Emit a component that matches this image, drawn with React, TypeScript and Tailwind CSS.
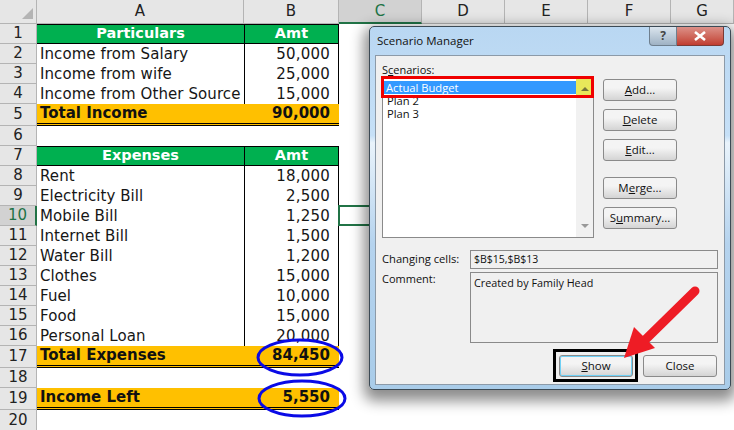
const COLS = [
  { label: 'A', w: 'w-[207px]' },
  { label: 'B', w: 'w-[95px]' },
  { label: 'C', w: 'w-[83px]', active: true },
  { label: 'D', w: 'w-[83px]' },
  { label: 'E', w: 'w-[83px]' },
  { label: 'F', w: 'w-[83px]' },
  { label: 'G', w: 'w-[63px]' },
];

type RowKind = 'head' | 'cell' | 'total' | 'blank';

const ROWS: { n: number; h: string; kind: RowKind; a?: string; b?: string }[] = [
  { n: 1, h: 'h-[20px]', kind: 'head', a: 'Particulars', b: 'Amt' },
  { n: 2, h: 'h-[20px]', kind: 'cell', a: 'Income from Salary', b: '50,000' },
  { n: 3, h: 'h-[20px]', kind: 'cell', a: 'Income from wife', b: '25,000' },
  { n: 4, h: 'h-[20px]', kind: 'cell', a: 'Income from Other Source', b: '15,000' },
  { n: 5, h: 'h-[22px]', kind: 'total', a: 'Total Income', b: '90,000' },
  { n: 6, h: 'h-[20px]', kind: 'blank' },
  { n: 7, h: 'h-[20px]', kind: 'head', a: 'Expenses', b: 'Amt' },
  { n: 8, h: 'h-[20px]', kind: 'cell', a: 'Rent', b: '18,000' },
  { n: 9, h: 'h-[20px]', kind: 'cell', a: 'Electricity Bill', b: '2,500' },
  { n: 10, h: 'h-[20px]', kind: 'cell', a: 'Mobile Bill', b: '1,250' },
  { n: 11, h: 'h-[20px]', kind: 'cell', a: 'Internet Bill', b: '1,500' },
  { n: 12, h: 'h-[20px]', kind: 'cell', a: 'Water Bill', b: '1,200' },
  { n: 13, h: 'h-[20px]', kind: 'cell', a: 'Clothes', b: '15,000' },
  { n: 14, h: 'h-[20px]', kind: 'cell', a: 'Fuel', b: '10,000' },
  { n: 15, h: 'h-[20px]', kind: 'cell', a: 'Food', b: '15,000' },
  { n: 16, h: 'h-[20px]', kind: 'cell', a: 'Personal Loan', b: '20,000' },
  { n: 17, h: 'h-[22px]', kind: 'total', a: 'Total Expenses', b: '84,450' },
  { n: 18, h: 'h-[20px]', kind: 'blank' },
  { n: 19, h: 'h-[22px]', kind: 'total', a: 'Income Left', b: '5,550' },
  { n: 20, h: 'h-[21px]', kind: 'blank' },
];

function Row({ row }: { row: (typeof ROWS)[number] }) {
  const active = row.n === 10;
  const header = (
    <div
      className={`flex w-[37px] shrink-0 items-center justify-center border-b border-[#b4b4b4] text-[15px] ${
        active ? 'border-r-2 border-r-[#217346] bg-[#d2d2d2] text-[#217346]' : 'border-r border-r-[#b4b4b4] bg-[#e6e6e6] text-[#222]'
      }`}
    >
      {row.n}
    </div>
  );

  if (row.kind === 'blank') {
    return <div className={`flex ${row.h}`}>{header}</div>;
  }
  if (row.kind === 'total') {
    return (
      <div className={`flex ${row.h}`}>
        {header}
        <div className="flex w-[302px] items-center justify-between border-b-[3px] border-double border-black bg-[#ffc000] pr-[9px] pl-[3px] text-[15px] font-bold text-[#111]">
          <span>{row.a}</span>
          <span>{row.b}</span>
        </div>
      </div>
    );
  }
  if (row.kind === 'head') {
    return (
      <div className={`flex ${row.h}`}>
        {header}
        <div className="flex w-[207px] items-center justify-center border-y border-black bg-[#00b050] text-[14.5px] font-bold text-white">
          {row.a}
        </div>
        <div className="flex w-[95px] items-center justify-center border-x border-y border-black bg-[#00b050] text-[14.5px] font-bold text-white">
          {row.b}
        </div>
      </div>
    );
  }
  return (
    <div className={`flex ${row.h}`}>
      {header}
      <div className="flex w-[207px] items-center overflow-hidden pl-[3px] text-[15px] tracking-[0.08px] whitespace-nowrap text-[#161616]">{row.a}</div>
      <div className="flex w-[95px] items-center justify-end border-x border-black pr-[8px] text-[15px] tracking-[0.2px] text-[#161616]">{row.b}</div>
    </div>
  );
}

function Sheet() {
  return (
    <div className="font-['DejaVu_Sans',sans-serif]">
      <div className="flex h-[24px]">
        <div className="relative w-[37px] shrink-0 border-r border-b border-[#b4b4b4] bg-[#e6e6e6]">
          <div className="absolute right-[3px] bottom-[4px] h-0 w-0 border-t-[11px] border-l-[11px] border-t-transparent border-l-transparent [border-bottom:0] [border-right:11px_solid_#b4b4b4]" />
        </div>
        {COLS.map((c) => (
          <div
            key={c.label}
            className={`flex ${c.w} items-center justify-center text-[15px] ${
              c.active
                ? 'border-r border-b-2 border-r-[#b4b4b4] border-b-[#217346] bg-[#d2d2d2] text-[#217346]'
                : 'border-r border-b border-[#b4b4b4] bg-[#e6e6e6] text-[#222]'
            }`}
          >
            {c.label}
          </div>
        ))}
      </div>
      {ROWS.map((r) => (
        <Row key={r.n} row={r} />
      ))}
    </div>
  );
}

function DlgButton({ children, className = '' }: { children: React.ReactNode; className?: string }) {
  return (
    <div
      className={`flex h-[22px] w-[74px] items-center justify-center rounded-[3px] border border-[#8a8a8a] bg-gradient-to-b from-[#f4f4f4] from-40% to-[#d4d4d4] text-[11.5px] text-[#111] ${className}`}
    >
      {children}
    </div>
  );
}

function Scenarios() {
  return (
    <div className="flex h-[161px] w-[212px] border border-[#8a8a8a] bg-white">
      <div className="flex-1 pt-[3px] pl-[1px]">
        <div className="h-[13px] bg-[#3399ff] pl-[2px] text-[11.2px] leading-[13px] text-white">Actual Budget</div>
        <div className="h-[13px] pl-[3px] text-[11.2px] leading-[13px] text-[#111]">Plan 2</div>
        <div className="h-[13px] pl-[3px] text-[11.2px] leading-[13px] text-[#111]">Plan 3</div>
      </div>
      <div className="flex w-[17px] flex-col justify-between bg-[#f1f1f1] pb-[9px]">
        <div className="flex h-[17px] items-end justify-center bg-[#e8e85a] pb-[4px]">
          <div className="h-0 w-0 border-x-[4px] border-b-[4px] border-x-transparent border-b-[#77773a]" />
        </div>
        <div className="flex justify-center">
          <div className="h-0 w-0 border-x-[4px] border-t-[4px] border-x-transparent border-t-[#999]" />
        </div>
      </div>
    </div>
  );
}

function Dialog() {
  return (
    <div className="absolute top-[26px] left-[369px] flex h-[364px] w-[362px] flex-col rounded-[5px] border border-[#3c4a55] bg-[linear-gradient(to_bottom,#b9d7f2_0%,#c6e0f7_30%,#e9f3fb_32%,#b5d3ee_60%,#a9cce9_100%)] px-[5px] pb-[4px] font-['Open_Sans',sans-serif] shadow-[0_6px_14px_5px_rgba(0,0,0,0.45)]">
      <div className="flex h-[28px] shrink-0 items-start justify-between">
        <span className="pt-[5px] pl-[2px] text-[11.5px] text-[#111]">Scenario Manager</span>
        <div className="mr-[1px] flex h-[19px]">
          <div className="flex w-[28px] items-center justify-center rounded-bl-[4px] border border-t-0 border-[#6f7f8e] bg-gradient-to-b from-[#dbe5ee] to-[#9fb2c4] text-[12px] font-bold text-[#444]">
            ?
          </div>
          <div className="flex w-[47px] items-center justify-center rounded-br-[4px] border border-t-0 border-l-0 border-[#7a3a35] bg-gradient-to-b from-[#dc9088] to-[#c03c30]">
            <svg width="14" height="10" viewBox="0 0 14 10" fill="none">
              <path d="M2 1 L12 9 M12 1 L2 9" stroke="white" strokeWidth="2.6" />
            </svg>
          </div>
        </div>
      </div>

      <div className="flex flex-1 flex-col border border-[#8c9aa8] bg-[#f0f0f0] pr-[6px] pl-[6px]">
        <div className="pt-[7px] text-[11px] leading-[14px] text-[#111]">
          S<span className="underline">c</span>enarios:
        </div>
        <div className="flex">
          <Scenarios />
          <div className="ml-[9px] flex flex-col gap-[8px] pt-[2px]">
            <DlgButton>
              <span className="underline">A</span>dd...
            </DlgButton>
            <DlgButton>
              <span className="underline">D</span>elete
            </DlgButton>
            <DlgButton>
              <span className="underline">E</span>dit...
            </DlgButton>
            <DlgButton className="mt-[8px]">
              M<span className="underline">e</span>rge...
            </DlgButton>
            <DlgButton>
              S<span className="underline">u</span>mmary...
            </DlgButton>
          </div>
        </div>

        <div className="mt-[12px] flex items-center">
          <span className="w-[88px] text-[11.2px] text-[#111]">Changing cells:</span>
          <div className="flex h-[19px] w-[248px] items-center border border-[#8a8a8a] pl-[3px] text-[10.5px] text-[#111]">
            $B$15,$B$13
          </div>
        </div>
        <div className="mt-[3px] flex">
          <span className="w-[88px] text-[11px] leading-[14px] text-[#111]">Comment:</span>
          <div className="h-[71px] w-[248px] border border-[#8a8a8a] pt-[2px] pl-[3px] text-[10.8px] text-[#111]">
            Created by Family Head
          </div>
        </div>

        <div className="mt-[12px] flex justify-end gap-[10px] pr-[1px]">
          <DlgButton className="border-[#2f9fd8] shadow-[inset_0_0_0_1px_#6fd0f5]">
            <span className="underline">S</span>how
          </DlgButton>
          <DlgButton>Close</DlgButton>
        </div>
      </div>
    </div>
  );
}

export default function App() {
  return (
    <div className="relative h-[430px] w-[734px] overflow-hidden bg-white">
      <Sheet />
      {/* selected cell C10 */}
      <div className="absolute top-[205px] left-[338px] h-[21px] w-[40px] border-2 border-[#217346]" />
      <Dialog />

      {/* callouts drawn on top of the screenshot */}
      <div className="absolute top-[76px] left-[381px] h-[22px] w-[213px] border-[3px] border-[#f00000]" />
      <div className="absolute top-[349px] left-[553px] h-[33px] w-[85px] border-[3px] border-black" />
      <svg className="absolute top-0 left-0" width="734" height="430" viewBox="0 0 734 430" fill="none">
        <ellipse cx="300" cy="357.5" rx="42" ry="17.5" stroke="#0a0ae6" strokeWidth="3" />
        <ellipse cx="302" cy="398.5" rx="43" ry="17.5" stroke="#0a0ae6" strokeWidth="3" />
        <path d="M695 291 L643 342" stroke="#ee1c25" strokeWidth="9" strokeLinecap="round" />
        <path d="M624 358 L634 327 L655 348 Z" fill="#ee1c25" />
      </svg>
    </div>
  );
}
